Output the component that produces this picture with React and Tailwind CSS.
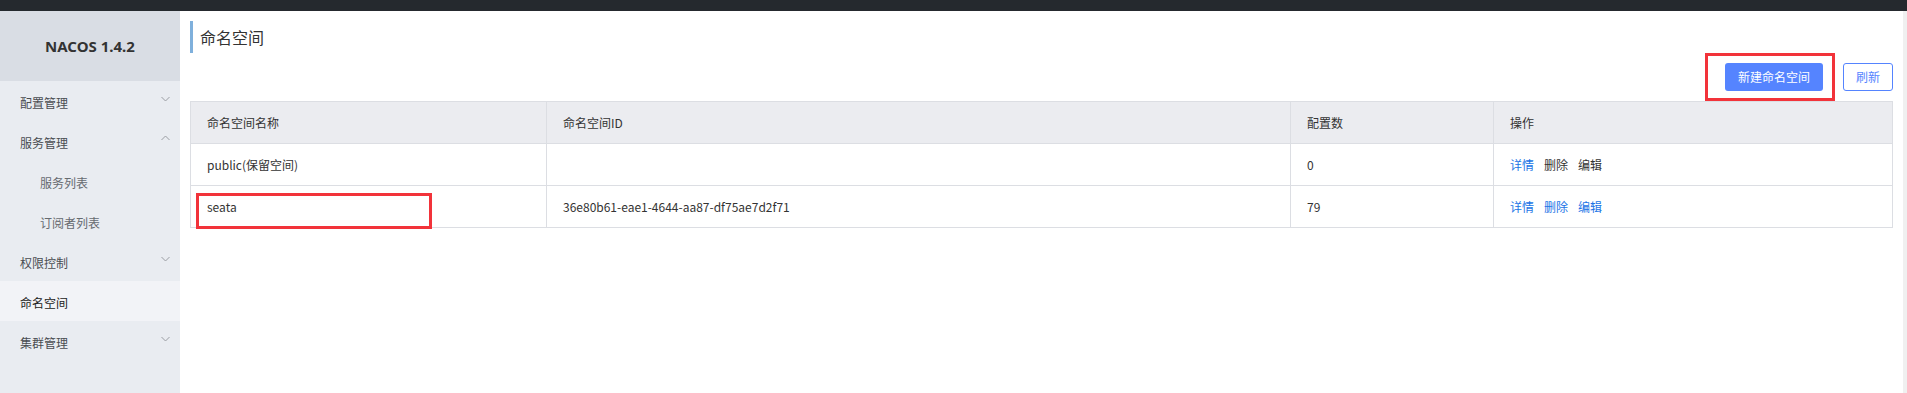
import React from "react";

const font = { fontFamily: '"Noto Sans CJK SC", "Noto Sans", sans-serif' };

function Chevron({ up }) {
  return (
    <svg width="9" height="6" viewBox="0 0 9 6" className={up ? "mb-[6px]" : "mb-[4px]"}>
      <polyline
        points={up ? "0.5,5 4.5,1 8.5,5" : "0.5,1 4.5,5 8.5,1"}
        fill="none"
        stroke="#9a9da3"
        strokeWidth="1"
      />
    </svg>
  );
}

function MenuItem({ label, chevron, sub, active }) {
  return (
    <div
      className={
        "h-10 flex items-center justify-between pr-[10px] text-[12px] " +
        (sub ? "pl-10 text-[#666a70] " : "pl-5 text-[#4a4d52] ") +
        (active ? "bg-[#f2f3f7] text-[#222]" : "")
      }
    >
      <span className="pt-[3px]">{label}</span>
      {chevron === "down" && <Chevron />}
      {chevron === "up" && <Chevron up />}
    </div>
  );
}

function Cell({ children, className = "" }) {
  return (
    <div className={"relative flex items-center px-4 border-r border-b border-[#dcdee3] text-[12px] text-[#333] " + className}>
      {children}
    </div>
  );
}

export default function App() {
  const rows = [
    { name: "public(保留空间)", id: "", count: "0", disabled: true },
    { name: "seata", id: "36e80b61-eae1-4644-aa87-df75ae7d2f71", count: "79", disabled: false, mark: true },
  ];
  return (
    <div className="w-[1907px] h-[393px] flex flex-col bg-white overflow-hidden" style={font}>
      <div className="h-[11px] bg-[#25292e] shrink-0" />
      <div className="flex flex-1 min-h-0">
        <aside className="w-[180px] shrink-0 bg-[#e9ecf1] flex flex-col">
          <div className="h-[70px] bg-[#d9dde4] flex items-center justify-center">
            <span className="text-[15px] font-bold text-[#333] mt-[1px]" style={{ fontFamily: '"Noto Sans", sans-serif' }}>
              NACOS 1.4.2
            </span>
          </div>
          <MenuItem label="配置管理" chevron="down" />
          <MenuItem label="服务管理" chevron="up" />
          <MenuItem label="服务列表" sub />
          <MenuItem label="订阅者列表" sub />
          <MenuItem label="权限控制" chevron="down" />
          <MenuItem label="命名空间" active />
          <MenuItem label="集群管理" chevron="down" />
        </aside>
        <main className="flex-1 pt-[10px] px-[10px]">
          <div className="h-8 border-l-[3px] border-[#7fb0dc] pl-[7px] flex items-center">
            <span className="text-[16px] text-[#333]">命名空间</span>
          </div>
          <div className="mt-[10px] flex justify-end gap-5">
            <div className="relative">
              <button className="h-7 w-[98px] rounded-[3px] bg-[#5584ff] text-white text-[12px]">新建命名空间</button>
              <span className="absolute -left-[20px] -right-[12px] -top-[10px] -bottom-[10px] border-[3px] border-[#f2333a] pointer-events-none" />
            </div>
            <button className="h-7 w-[50px] rounded-[3px] border border-[#5584ff] bg-white text-[#5584ff] text-[12px]">刷新</button>
          </div>
          <div className="mt-[10px] border-l border-t border-[#dcdee3]">
            <div className="grid grid-cols-[356px_744px_203px_1fr] h-[42px] bg-[#ebecf0]">
              <Cell>命名空间名称</Cell>
              <Cell>命名空间ID</Cell>
              <Cell>配置数</Cell>
              <Cell>操作</Cell>
            </div>
            {rows.map((r) => (
              <div key={r.name} className="grid grid-cols-[356px_744px_203px_1fr] h-[42px] bg-white">
                <Cell>
                  {r.name}
                  {r.mark && (
                    <span className="absolute left-[5px] top-[7px] w-[236px] -bottom-[2px] border-[3px] border-[#f2333a] pointer-events-none" />
                  )}
                </Cell>
                <Cell>{r.id}</Cell>
                <Cell>{r.count}</Cell>
                <Cell>
                  <div className="flex gap-[10px]">
                    <span className="text-[#2174e6]">详情</span>
                    <span className={r.disabled ? "text-[#333]" : "text-[#2174e6]"}>删除</span>
                    <span className={r.disabled ? "text-[#333]" : "text-[#2174e6]"}>编辑</span>
                  </div>
                </Cell>
              </div>
            ))}
          </div>
        </main>
        <div className="w-[4px] shrink-0 bg-[#f0f0f0]" />
      </div>
    </div>
  );
}
